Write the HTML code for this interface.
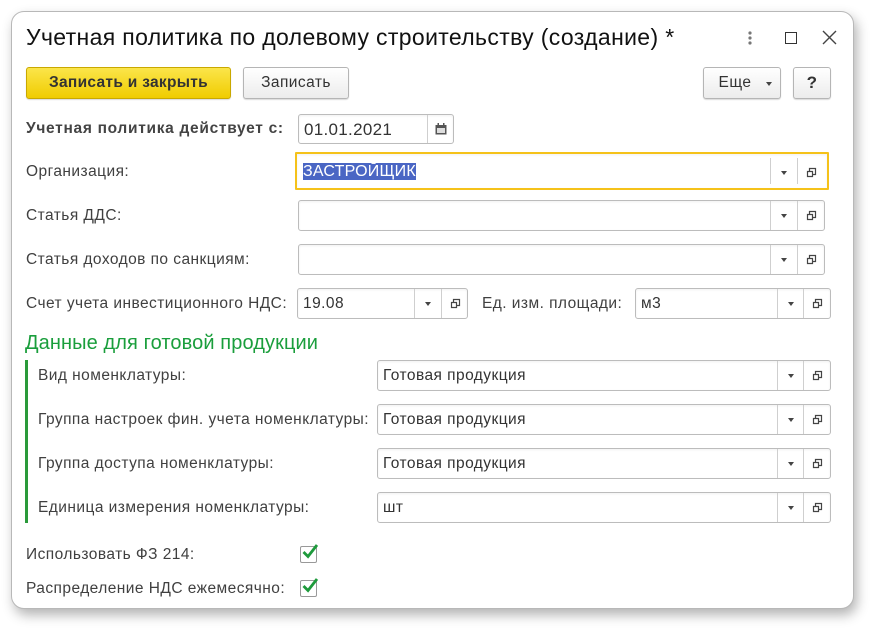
<!DOCTYPE html>
<html><head><meta charset="utf-8"><style>
*{box-sizing:border-box;margin:0;padding:0}
body{width:884px;height:640px;background:#fff;font-family:"Liberation Sans",Arial,sans-serif;position:relative;overflow:hidden;color:#404040;font-size:15.5px;letter-spacing:.45px}
.win{position:absolute;left:11px;top:11px;width:843px;height:598px;background:#fff;border:1px solid #b8b8b8;border-radius:13px;box-shadow:3px 6px 12px rgba(0,0,0,.3)}
.a{position:absolute;white-space:nowrap}
.lbl{position:absolute;white-space:nowrap;line-height:18px}
.f{position:absolute;height:31px;border:1px solid #bcbcbc;border-radius:3px;background:#fff;box-shadow:inset 0 1px 2px rgba(0,0,0,.06)}
.f .t{position:absolute;left:5px;top:6px;color:#333;line-height:18px}
.f .d{position:absolute;top:0;bottom:0;width:27px;border-left:1px solid #cfcfcf}
.f .d.dd::after{content:"";position:absolute;left:10px;top:13px;border:3.5px solid transparent;border-top:4px solid #444;border-bottom:0}
.btn{position:absolute;border:1px solid #b5b5b5;border-radius:3px;background:linear-gradient(#fff,#ececec);box-shadow:0 1px 1px rgba(0,0,0,.15);text-align:center;color:#333}
</style></head><body>
<div class="win"></div>
<svg width="0" height="0" style="position:absolute"><defs>
<g id="op"><path d="M3.5 4.5V1.5h6v6H6.5" fill="none" stroke="#444" stroke-width="1.2"/><path d="M1.5 4.5h5v5h-5z" fill="none" stroke="#444" stroke-width="1.2"/></g>
</defs></svg>
<div class="a" style="left:26px;top:24px;font-size:23px;letter-spacing:.35px;color:#111">Учетная политика по долевому строительству (создание) *</div>
<svg class="a" style="left:745px;top:30px" width="10" height="16"><circle cx="5" cy="3" r="1.6" fill="#777"/><circle cx="5" cy="8" r="1.6" fill="#777"/><circle cx="5" cy="13" r="1.6" fill="#777"/></svg>
<div class="a" style="left:785px;top:32px;width:12px;height:12px;border:1.5px solid #333"></div>
<svg class="a" style="left:822px;top:30px" width="15" height="15"><path d="M1 1L14 14M14 1L1 14" stroke="#444" stroke-width="1.4"/></svg>

<div class="btn" style="left:26px;top:67px;width:205px;height:32px;background:linear-gradient(#fbe54a,#f0cc00);border-color:#c9a800;color:#333;font-weight:bold;font-size:15.5px;letter-spacing:.3px;line-height:30px">Записать и закрыть</div>
<div class="btn" style="left:243px;top:67px;width:106px;height:32px;line-height:30px">Записать</div>
<div class="btn" style="left:703px;top:67px;width:78px;height:32px;line-height:30px;padding-right:14px">Еще<span style="position:absolute;left:62px;top:14px;border:3.5px solid transparent;border-top:4px solid #444;border-bottom:0"></span></div>
<div class="btn" style="left:793px;top:67px;width:38px;height:32px;line-height:30px;font-weight:bold;font-size:17px">?</div>

<div class="lbl" style="left:26px;top:120px;font-weight:bold;color:#444;letter-spacing:.7px">Учетная политика действует с:</div>
<div class="f" style="left:298px;top:114px;width:156px;height:30px"><div class="t" style="left:5px;font-size:17px;letter-spacing:.3px">01.01.2021</div><div class="d" style="left:128px;">
<svg style="position:absolute;left:7px;top:8px" width="12" height="12"><rect x="0.5" y="2" width="11" height="9.5" fill="#555"/><rect x="2" y="5" width="8" height="5" fill="#ddd"/><rect x="2.5" y="0" width="1.5" height="3" fill="#555"/><rect x="8" y="0" width="1.5" height="3" fill="#555"/></svg></div></div>

<div class="lbl" style="left:26px;top:163px">Организация:</div>
<div class="f" style="left:295px;top:152px;width:534px;height:38px;border:2px solid #f5c21a;border-radius:1px"><div class="t" style="left:6px;top:9px"><span style="background:#4a66c4;color:#fff;font-size:16px;letter-spacing:.2px">ЗАСТРОЙЩИК</span></div><div class="d dd" style="left:473px;top:4px;bottom:4px"></div><div class="d" style="left:500px;top:4px;bottom:4px"><svg style="position:absolute;left:8px;top:9px" width="11" height="11"><use href="#op"/></svg></div></div>

<div class="lbl" style="left:26px;top:207px">Статья ДДС:</div>
<div class="f" style="left:298px;top:200px;width:527px"><div class="d dd" style="left:471px"></div><div class="d" style="left:498px"><svg style="position:absolute;left:8px;top:9px" width="11" height="11"><use href="#op"/></svg></div></div>

<div class="lbl" style="left:26px;top:251px">Статья доходов по санкциям:</div>
<div class="f" style="left:298px;top:244px;width:527px"><div class="d dd" style="left:471px"></div><div class="d" style="left:498px"><svg style="position:absolute;left:8px;top:9px" width="11" height="11"><use href="#op"/></svg></div></div>

<div class="lbl" style="left:26px;top:295px">Счет учета инвестиционного НДС:</div>
<div class="f" style="left:297px;top:288px;width:171px"><div class="t">19.08</div><div class="d dd" style="left:116px"></div><div class="d" style="left:143px"><svg style="position:absolute;left:8px;top:9px" width="11" height="11"><use href="#op"/></svg></div></div>
<div class="lbl" style="left:482px;top:295px">Ед. изм. площади:</div>
<div class="f" style="left:635px;top:288px;width:196px"><div class="t">м3</div><div class="d dd" style="left:141px"></div><div class="d" style="left:167px"><svg style="position:absolute;left:8px;top:9px" width="11" height="11"><use href="#op"/></svg></div></div>

<div class="a" style="left:25px;top:332px;font-size:20px;letter-spacing:.1px;color:#1a9e3c">Данные для готовой продукции</div>
<div class="a" style="left:25px;top:360px;width:3px;height:163px;background:#2a9a3a"></div>

<div class="lbl" style="left:38px;top:367px">Вид номенклатуры:</div>
<div class="f" style="left:377px;top:360px;width:454px"><div class="t">Готовая продукция</div><div class="d dd" style="left:399px"></div><div class="d" style="left:425px"><svg style="position:absolute;left:8px;top:9px" width="11" height="11"><use href="#op"/></svg></div></div>
<div class="lbl" style="left:38px;top:411px">Группа настроек фин. учета номенклатуры:</div>
<div class="f" style="left:377px;top:404px;width:454px"><div class="t">Готовая продукция</div><div class="d dd" style="left:399px"></div><div class="d" style="left:425px"><svg style="position:absolute;left:8px;top:9px" width="11" height="11"><use href="#op"/></svg></div></div>
<div class="lbl" style="left:38px;top:455px">Группа доступа номенклатуры:</div>
<div class="f" style="left:377px;top:448px;width:454px"><div class="t">Готовая продукция</div><div class="d dd" style="left:399px"></div><div class="d" style="left:425px"><svg style="position:absolute;left:8px;top:9px" width="11" height="11"><use href="#op"/></svg></div></div>
<div class="lbl" style="left:38px;top:499px">Единица измерения номенклатуры:</div>
<div class="f" style="left:377px;top:492px;width:454px"><div class="t">шт</div><div class="d dd" style="left:399px"></div><div class="d" style="left:425px"><svg style="position:absolute;left:8px;top:9px" width="11" height="11"><use href="#op"/></svg></div></div>

<div class="lbl" style="left:26px;top:546px">Использовать ФЗ 214:</div>
<div class="a" style="left:300px;top:546px;width:17px;height:17px;border:1px solid #999;border-radius:2px"></div>
<svg class="a" style="left:301px;top:542px" width="18" height="18"><path d="M2.5 10L7 14.5L16 3" fill="none" stroke="#1e9a3c" stroke-width="2.8"/></svg>
<div class="lbl" style="left:26px;top:580px">Распределение НДС ежемесячно:</div>
<div class="a" style="left:300px;top:580px;width:17px;height:17px;border:1px solid #999;border-radius:2px"></div>
<svg class="a" style="left:301px;top:576px" width="18" height="18"><path d="M2.5 10L7 14.5L16 3" fill="none" stroke="#1e9a3c" stroke-width="2.8"/></svg>
</body></html>
